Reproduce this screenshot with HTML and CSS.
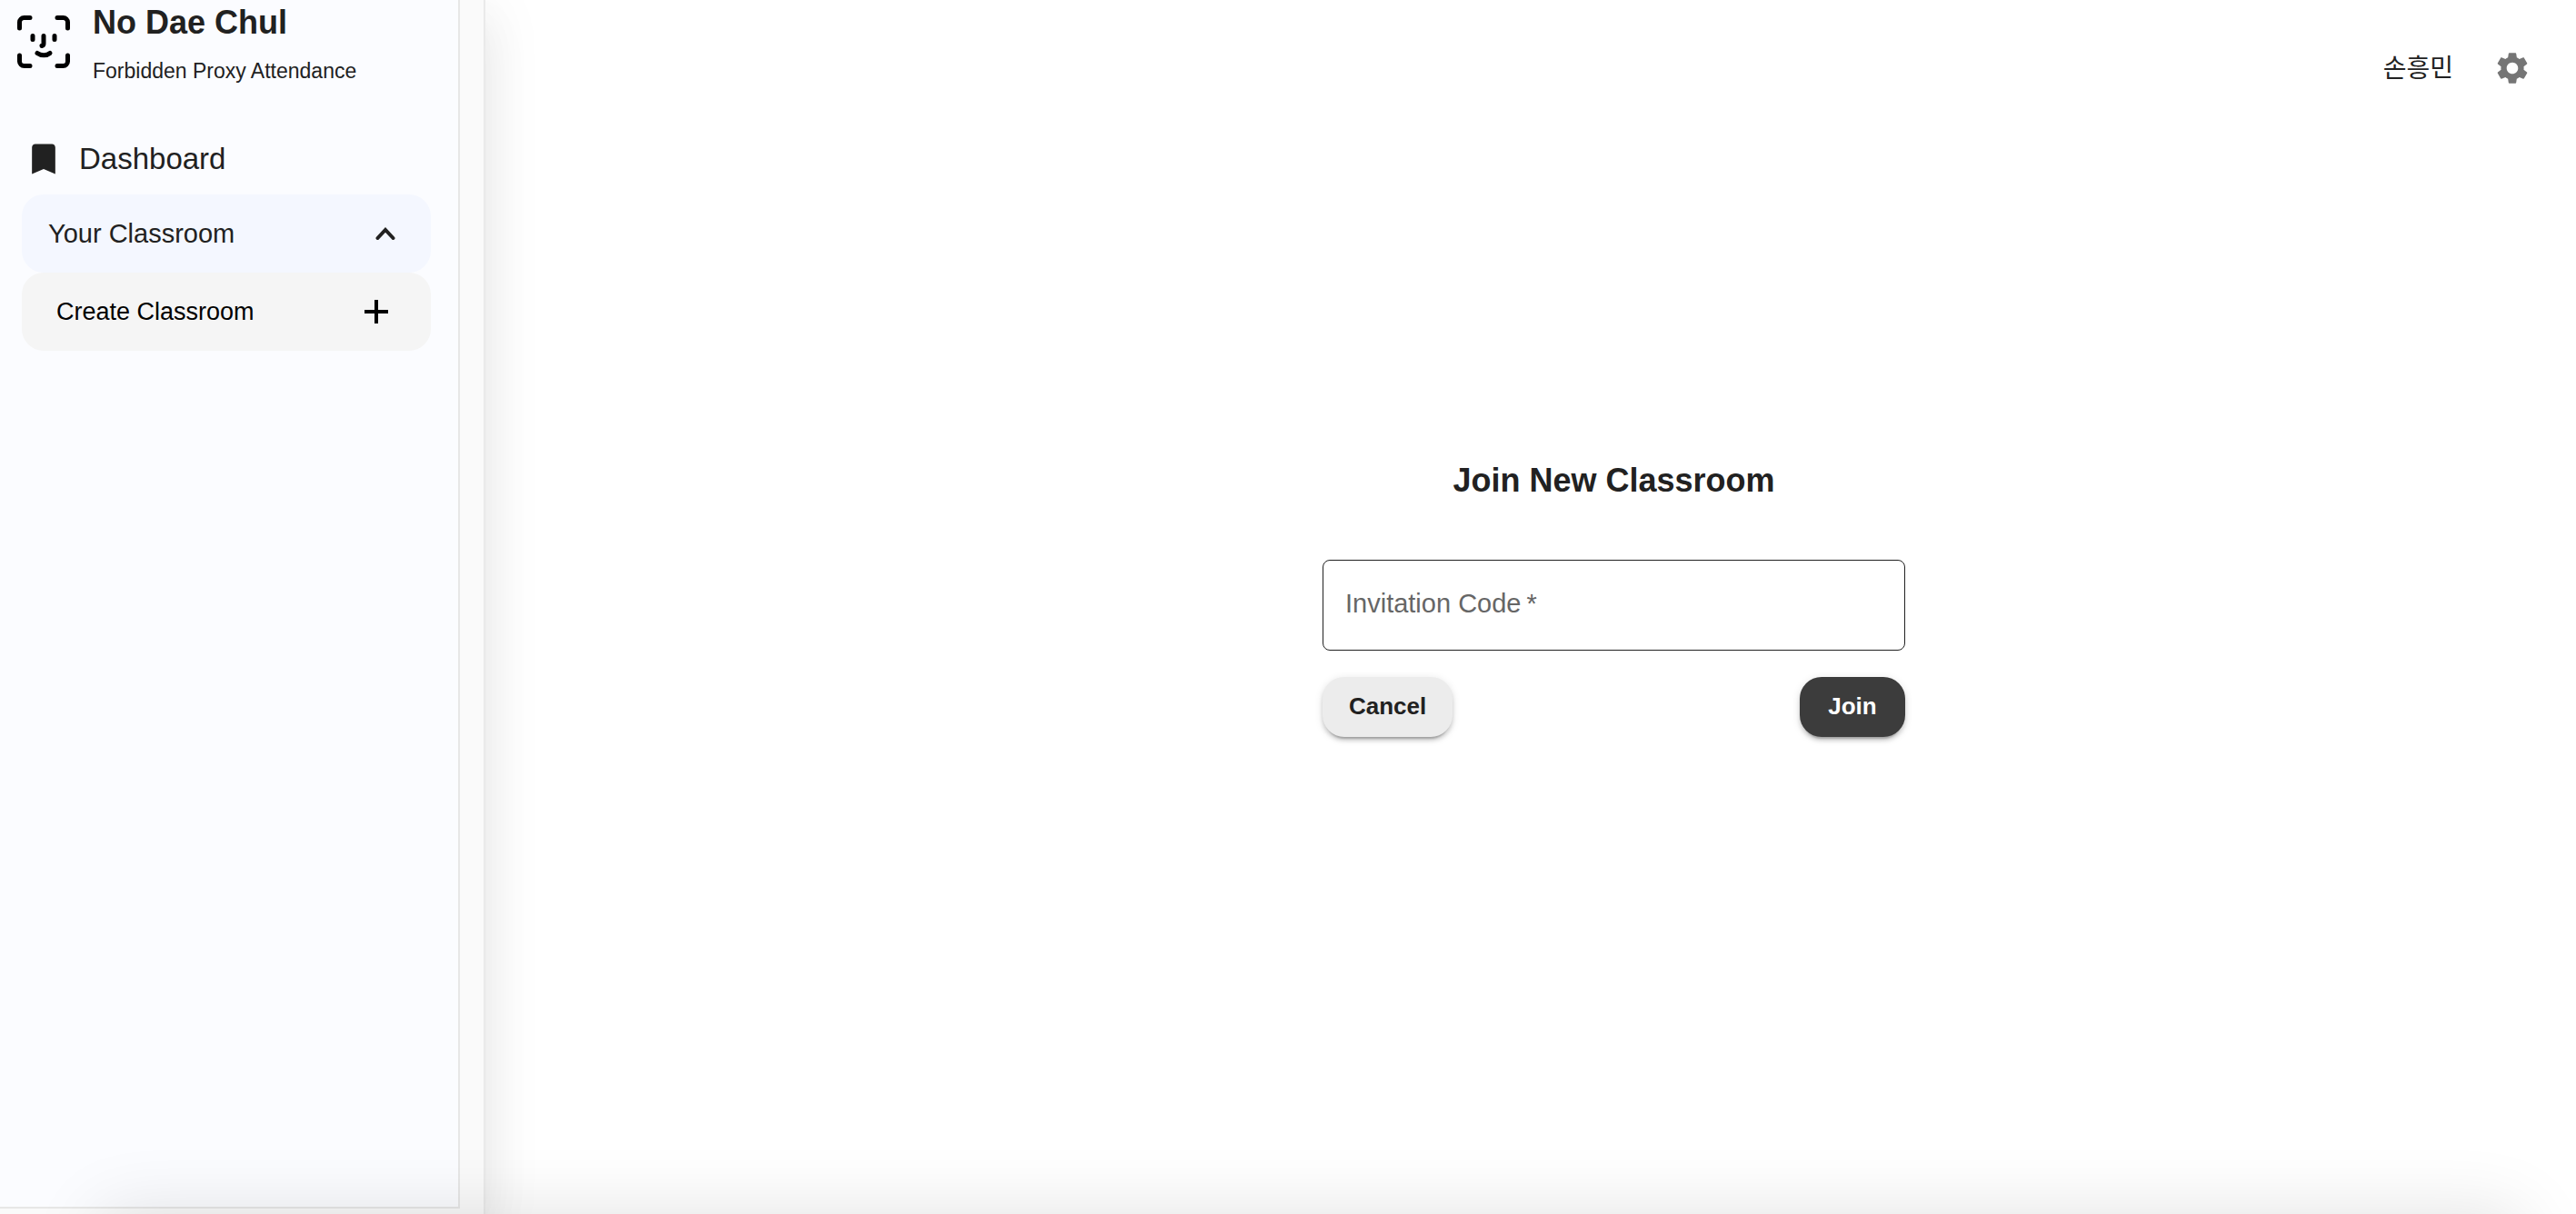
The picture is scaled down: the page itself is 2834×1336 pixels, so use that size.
FILE: index.html
```html
<!DOCTYPE html>
<html lang="en">
<head>
<meta charset="utf-8">
<title>No Dae Chul</title>
<link rel="stylesheet" href="styles.css">
</head>
<body>
<div class="app">
  <aside class="drawer">
    <div class="panel">
      <header class="brand">
        <svg class="brand-logo" viewBox="0 0 58 58" aria-hidden="true" fill="none" stroke="currentColor" stroke-width="5" stroke-linecap="round" stroke-linejoin="round">
          <path d="M2.500 14V7.500a5 5 0 0 1 5-5H14M44 2.500h6.500a5 5 0 0 1 5 5V14M55.500 44v6.500a5 5 0 0 1-5 5H44M14 55.500H7.500a5 5 0 0 1-5-5V44"/>
          <path d="M17 22.500v4M41 22.500v4M29 22.500v8.500a2.500 2.500 0 0 1-2 2.500M22 41.500c4 3 10.500 3 14 0"/>
        </svg>
        <div class="brand-text">
          <h1 class="brand-name">No Dae Chul</h1>
          <p class="brand-tagline">Forbidden Proxy Attendance</p>
        </div>
      </header>
      <nav class="nav">
        <a class="nav-dashboard" href="#dashboard">
          <svg class="nav-icon" viewBox="0 0 24 24" aria-hidden="true" fill="currentColor"><path d="M17 3H7c-1.100 0-1.990.9-1.990 2L5 21l7-3 7 3V5c0-1.100-.9-2-2-2z"/></svg>
          <span>Dashboard</span>
        </a>
        <button class="nav-row nav-classroom" type="button" aria-expanded="true">
          <span>Your Classroom</span>
          <svg class="chevron" viewBox="0 0 22 14" aria-hidden="true" fill="none" stroke="currentColor" stroke-width="4" stroke-linecap="round"><path d="M2.500 12L11 3l8.500 9"/></svg>
        </button>
        <button class="nav-row nav-create" type="button">
          <span>Create Classroom</span>
          <svg class="plus" viewBox="0 0 26 26" aria-hidden="true" fill="none" stroke="currentColor" stroke-width="4"><path d="M13 0v26M0 13h26"/></svg>
        </button>
      </nav>
    </div>
  </aside>
  <div class="content">
    <header class="topbar">
      <span class="user-name" lang="ko">손흥민</span>
      <button class="settings" type="button" aria-label="Settings">
        <svg viewBox="0 0 24 24" aria-hidden="true" fill="currentColor"><path d="M19.140 12.940c.04-.3.06-.61.06-.94 0-.32-.02-.64-.07-.94l2.030-1.580c.18-.14.23-.41.12-.61l-1.920-3.320c-.12-.22-.37-.29-.59-.22l-2.390.96c-.5-.38-1.030-.7-1.620-.94l-.36-2.540c-.04-.24-.24-.41-.48-.41h-3.840c-.24 0-.43.17-.47.41l-.36 2.540c-.59.24-1.130.57-1.620.94l-2.390-.96c-.22-.08-.47 0-.59.22L2.740 8.870c-.12.21-.08.47.12.61l2.030 1.580c-.05.3-.09.63-.09.94s.02.64.07.94l-2.030 1.580c-.18.14-.23.41-.12.61l1.920 3.320c.12.22.37.29.59.22l2.390-.96c.5.38 1.030.7 1.620.94l.36 2.540c.05.24.24.41.48.41h3.840c.24 0 .44-.17.47-.41l.36-2.540c.59-.24 1.130-.56 1.620-.94l2.390.96c.22.08.47 0 .59-.22l1.920-3.320c.12-.22.07-.47-.12-.61l-2.010-1.580zM12 15.600c-1.980 0-3.600-1.620-3.600-3.600s1.620-3.600 3.600-3.600 3.600 1.620 3.600 3.600-1.620 3.600-3.600 3.600z"/></svg>
      </button>
    </header>
    <main class="main">
      <form class="join-form">
        <h2 class="join-title">Join New Classroom</h2>
        <div class="field">
          <input class="field-input" id="code" type="text" required placeholder=" ">
          <label class="field-label" for="code">Invitation Code<span class="field-star">*</span></label>
        </div>
        <div class="actions">
          <button class="btn btn-cancel" type="button">Cancel</button>
          <button class="btn btn-join" type="submit">Join</button>
        </div>
      </form>
    </main>
  </div>
  <div class="bottom-sheet" aria-hidden="true"></div>
</div>
</body>
</html>
```
FILE: styles.css
```css
* {
  box-sizing: border-box;
}

body {
  margin: 0;
  background: #fff;
  color: #212121;
  font-family: "Liberation Sans", Arial, "Noto Sans CJK KR", sans-serif;
}

h1, h2, p {
  margin: 0;
}

button {
  border: 0;
  font-family: inherit;
  color: inherit;
  cursor: pointer;
}

svg {
  display: block;
}

.app {
  display: flex;
  min-height: 100vh;
  overflow: hidden;
  position: relative;
}

/* Left drawer */
.drawer {
  flex: 0 0 534px;
  display: flex;
  padding: 0 26px 6px 0;
  background: #fafafa;
  border-right: 2px solid #eaeaea;
  box-shadow: 0 16px 20px -10px rgba(0, 0, 0, 0.05), 0 32px 48px 4px rgba(0, 0, 0, 0.05), 0 12px 60px 10px rgba(0, 0, 0, 0.05);
}

.panel {
  flex: 1;
  background: #fbfcff;
  border-right: 2px solid #e7e7e7;
  border-bottom: 2px solid #e7e7e7;
}

.brand {
  display: flex;
  gap: 25px;
  padding: 5px 0 0 19px;
}

.brand-logo {
  width: 58px;
  height: 58px;
  margin-top: 12px;
  color: #000;
}

.brand-name {
  font-size: 36px;
  line-height: 40px;
}

.brand-tagline {
  margin-top: 19px;
  font-size: 23px;
  line-height: 28px;
}

.nav {
  display: flex;
  flex-direction: column;
  padding: 51px 30px 0 24px;
}

.nav-dashboard {
  display: flex;
  align-items: center;
  gap: 17px;
  height: 64px;
  margin-bottom: 7px;
  padding-left: 2px;
  color: inherit;
  font-size: 33px;
  text-decoration: none;
}

.nav-icon {
  width: 44px;
  height: 44px;
}

.nav-row {
  display: flex;
  align-items: center;
  justify-content: space-between;
  height: 86px;
  border-radius: 24px;
}

.nav-classroom {
  padding: 0 39px 0 29px;
  background: #f4f7ff;
  font-size: 29px;
}

.nav-create {
  padding: 0 47px 0 38px;
  background: #f5f5f5;
  color: #000;
  font-size: 27px;
}

.chevron {
  width: 22px;
  height: 14px;
}

.plus {
  width: 26px;
  height: 26px;
}

/* Main area */
.content {
  flex: 1;
  display: flex;
  flex-direction: column;
}

.topbar {
  display: flex;
  align-items: center;
  justify-content: flex-end;
  gap: 44px;
  height: 150px;
  padding-right: 49px;
}

.user-name {
  padding-bottom: 4px;
  font-size: 28px;
}

.settings {
  padding: 0;
  background: none;
  color: #757575;
}

.settings svg {
  width: 42px;
  height: 42px;
}

.main {
  flex: 1;
  display: flex;
  justify-content: center;
  padding: 356px 0 64px 183px;
}

.join-form {
  width: 100%;
  max-width: 641px;
}

.join-title {
  font-size: 36px;
  line-height: 46px;
  text-align: center;
}

.field {
  position: relative;
  margin-top: 64px;
}

.field-input {
  display: block;
  width: 100%;
  height: 100px;
  padding: 0 25px;
  border: 1px solid #212121;
  border-radius: 8px;
  background: transparent;
  color: inherit;
  font: inherit;
  font-size: 29px;
}

/* The label lies over the empty input as its placeholder */
.field-label {
  position: absolute;
  left: 25px;
  top: 0;
  color: #666;
  font-size: 29px;
  line-height: 96px;
  pointer-events: none;
}

.field-input:not(:placeholder-shown) + .field-label {
  visibility: hidden;
}

.field-star {
  margin-left: 6px;
}

.actions {
  display: flex;
  justify-content: space-between;
  margin-top: 29px;
}

.btn {
  height: 66px;
  padding: 0 29px 2px;
  border-radius: 24px;
  font-size: 26px;
  font-weight: 700;
  box-shadow: 0 6px 2px -4px rgba(0, 0, 0, 0.2), 0 4px 4px 0 rgba(0, 0, 0, 0.14), 0 2px 10px 0 rgba(0, 0, 0, 0.12);
}

.btn-cancel {
  background: #ececec;
}

.btn-join {
  min-width: 116px;
  background: #3c3c3c;
  color: #fff;
}

/* Closed sheet below the fold; only its shadow reaches the page */
.bottom-sheet {
  position: absolute;
  top: 100%;
  left: 110px;
  right: 60px;
  height: 160px;
  box-shadow: 0 0 80px 0 rgba(0, 0, 0, 0.12);
  pointer-events: none;
}
```
